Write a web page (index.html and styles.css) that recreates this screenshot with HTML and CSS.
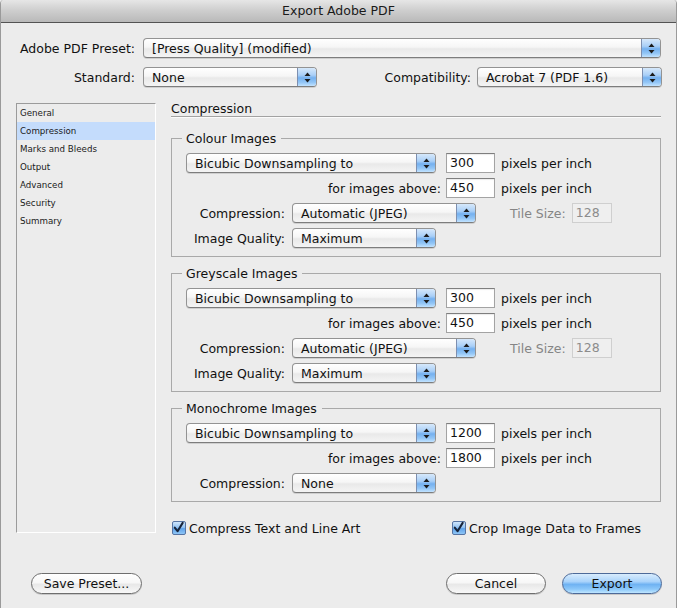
FILE: index.html
```html
<!DOCTYPE html>
<html>
<head>
<meta charset="utf-8">
<title>Export Adobe PDF</title>
<link rel="stylesheet" href="styles.css">
</head>
<body>
<div class="window">
  <div class="titlebar">Export Adobe PDF</div>
  <div class="content">
    <div class="toprow row1">
      <span class="toplabel">Adobe PDF Preset:</span>
      <div class="popup w-preset"><span class="ptext">[Press Quality] (modified)</span><span class="arrows"><svg width="7" height="11" viewBox="0 0 7 11"><path d="M3.5 0.5 L6.5 4 L0.5 4 Z" fill="#1c1c1c"/><path d="M0.5 7 L6.5 7 L3.5 10.5 Z" fill="#1c1c1c"/></svg></span></div>
    </div>
    <div class="toprow row2">
      <span class="toplabel">Standard:</span>
      <div class="popup w-std"><span class="ptext">None</span><span class="arrows"><svg width="7" height="11" viewBox="0 0 7 11"><path d="M3.5 0.5 L6.5 4 L0.5 4 Z" fill="#1c1c1c"/><path d="M0.5 7 L6.5 7 L3.5 10.5 Z" fill="#1c1c1c"/></svg></span></div>
      <span class="complabel">Compatibility:</span>
      <div class="popup w-compat"><span class="ptext">Acrobat 7 (PDF 1.6)</span><span class="arrows"><svg width="7" height="11" viewBox="0 0 7 11"><path d="M3.5 0.5 L6.5 4 L0.5 4 Z" fill="#1c1c1c"/><path d="M0.5 7 L6.5 7 L3.5 10.5 Z" fill="#1c1c1c"/></svg></span></div>
    </div>

    <div class="main">
      <ul class="sidebar">
        <li>General</li>
        <li class="selected">Compression</li>
        <li>Marks and Bleeds</li>
        <li>Output</li>
        <li>Advanced</li>
        <li>Security</li>
        <li>Summary</li>
      </ul>

      <div class="panel">
        <div class="panel-title">Compression</div>

        <fieldset class="group first">
          <legend>Colour Images</legend>
          <div class="grow">
            <div class="popup w-sample"><span class="ptext">Bicubic Downsampling to</span><span class="arrows"><svg width="7" height="11" viewBox="0 0 7 11"><path d="M3.5 0.5 L6.5 4 L0.5 4 Z" fill="#1c1c1c"/><path d="M0.5 7 L6.5 7 L3.5 10.5 Z" fill="#1c1c1c"/></svg></span></div>
            <div class="field">300</div>
            <span class="unit">pixels per inch</span>
          </div>
          <div class="grow">
            <span class="wide-label">for images above:</span>
            <div class="field">450</div>
            <span class="unit">pixels per inch</span>
          </div>
          <div class="grow">
            <span class="short-label">Compression:</span>
            <div class="popup w-comp"><span class="ptext">Automatic (JPEG)</span><span class="arrows"><svg width="7" height="11" viewBox="0 0 7 11"><path d="M3.5 0.5 L6.5 4 L0.5 4 Z" fill="#1c1c1c"/><path d="M0.5 7 L6.5 7 L3.5 10.5 Z" fill="#1c1c1c"/></svg></span></div>
            <span class="tile-label">Tile Size:</span>
            <div class="field disabled">128</div>
          </div>
          <div class="grow">
            <span class="short-label">Image Quality:</span>
            <div class="popup w-qual"><span class="ptext">Maximum</span><span class="arrows"><svg width="7" height="11" viewBox="0 0 7 11"><path d="M3.5 0.5 L6.5 4 L0.5 4 Z" fill="#1c1c1c"/><path d="M0.5 7 L6.5 7 L3.5 10.5 Z" fill="#1c1c1c"/></svg></span></div>
          </div>
        </fieldset>

        <fieldset class="group">
          <legend>Greyscale Images</legend>
          <div class="grow">
            <div class="popup w-sample"><span class="ptext">Bicubic Downsampling to</span><span class="arrows"><svg width="7" height="11" viewBox="0 0 7 11"><path d="M3.5 0.5 L6.5 4 L0.5 4 Z" fill="#1c1c1c"/><path d="M0.5 7 L6.5 7 L3.5 10.5 Z" fill="#1c1c1c"/></svg></span></div>
            <div class="field">300</div>
            <span class="unit">pixels per inch</span>
          </div>
          <div class="grow">
            <span class="wide-label">for images above:</span>
            <div class="field">450</div>
            <span class="unit">pixels per inch</span>
          </div>
          <div class="grow">
            <span class="short-label">Compression:</span>
            <div class="popup w-comp"><span class="ptext">Automatic (JPEG)</span><span class="arrows"><svg width="7" height="11" viewBox="0 0 7 11"><path d="M3.5 0.5 L6.5 4 L0.5 4 Z" fill="#1c1c1c"/><path d="M0.5 7 L6.5 7 L3.5 10.5 Z" fill="#1c1c1c"/></svg></span></div>
            <span class="tile-label">Tile Size:</span>
            <div class="field disabled">128</div>
          </div>
          <div class="grow">
            <span class="short-label">Image Quality:</span>
            <div class="popup w-qual"><span class="ptext">Maximum</span><span class="arrows"><svg width="7" height="11" viewBox="0 0 7 11"><path d="M3.5 0.5 L6.5 4 L0.5 4 Z" fill="#1c1c1c"/><path d="M0.5 7 L6.5 7 L3.5 10.5 Z" fill="#1c1c1c"/></svg></span></div>
          </div>
        </fieldset>

        <fieldset class="group">
          <legend>Monochrome Images</legend>
          <div class="grow">
            <div class="popup w-sample"><span class="ptext">Bicubic Downsampling to</span><span class="arrows"><svg width="7" height="11" viewBox="0 0 7 11"><path d="M3.5 0.5 L6.5 4 L0.5 4 Z" fill="#1c1c1c"/><path d="M0.5 7 L6.5 7 L3.5 10.5 Z" fill="#1c1c1c"/></svg></span></div>
            <div class="field">1200</div>
            <span class="unit">pixels per inch</span>
          </div>
          <div class="grow">
            <span class="wide-label">for images above:</span>
            <div class="field">1800</div>
            <span class="unit">pixels per inch</span>
          </div>
          <div class="grow">
            <span class="short-label">Compression:</span>
            <div class="popup w-qual"><span class="ptext">None</span><span class="arrows"><svg width="7" height="11" viewBox="0 0 7 11"><path d="M3.5 0.5 L6.5 4 L0.5 4 Z" fill="#1c1c1c"/><path d="M0.5 7 L6.5 7 L3.5 10.5 Z" fill="#1c1c1c"/></svg></span></div>
          </div>
        </fieldset>

        <div class="checks">
          <label class="check c1"><span class="box"><svg width="14" height="14" viewBox="0 0 14 14"><path d="M3 6.5 L6 10.5 L11.5 1.5" fill="none" stroke="#18243a" stroke-width="2.2" stroke-linecap="round" stroke-linejoin="round"/></svg></span>Compress Text and Line Art</label>
          <label class="check"><span class="box"><svg width="14" height="14" viewBox="0 0 14 14"><path d="M3 6.5 L6 10.5 L11.5 1.5" fill="none" stroke="#18243a" stroke-width="2.2" stroke-linecap="round" stroke-linejoin="round"/></svg></span>Crop Image Data to Frames</label>
        </div>
      </div>
    </div>

    <div class="buttons">
      <div class="btn b-save">Save Preset...</div>
      <div class="spacer"></div>
      <div class="btn b-cancel">Cancel</div>
      <div class="btn b-export">Export</div>
    </div>
  </div>
</div>
</body>
</html>
```

FILE: styles.css
```css
* { box-sizing: border-box; }
html, body {
  margin: 0;
  padding: 0;
  background: #ececec;
}
body {
  width: 677px;
  height: 608px;
  overflow: hidden;
  font-family: "DejaVu Sans", "Noto Sans", sans-serif;
  font-size: 12.5px;
  color: #111;
}
.window {
  width: 677px;
  height: 608px;
  border-left: 1px solid #9a9a9a;
  border-right: 1px solid #9a9a9a;
  background: #ececec;
  border-radius: 4px 4px 0 0;
  overflow: hidden;
}
.titlebar {
  height: 23px;
  line-height: 22px;
  text-align: center;
  font-size: 12.5px;
  color: #1a1a1a;
  background: linear-gradient(#e6e6e6 0%, #cfcfcf 45%, #b9b9b9 100%);
  border-bottom: 1px solid #535353;
}
.content {
  display: flex;
  flex-direction: column;
}
.toprow {
  display: flex;
  align-items: center;
  height: 20px;
}
.row1 { margin-top: 15px; }
.row2 { margin-top: 9px; }
.toplabel {
  width: 134px;
  text-align: right;
  margin-right: 8px;
}
.complabel {
  width: 154px;
  text-align: right;
  margin-right: 6px;
}

/* popup button */
.popup {
  position: relative;
  height: 20px;
  display: flex;
  align-items: center;
  border: 1px solid #939393;
  border-bottom-color: #7d7d7d;
  border-radius: 4px;
  background: linear-gradient(#ffffff 0%, #f6f6f6 45%, #e9e9e9 55%, #f4f4f4 100%);
  box-shadow: 0 1px 0 rgba(0,0,0,0.12);
  overflow: hidden;
}
.ptext {
  flex: 1;
  padding-left: 8px;
  white-space: nowrap;
  overflow: hidden;
}
.arrows {
  width: 19px;
  height: 100%;
  display: flex;
  align-items: center;
  justify-content: center;
  border-left: 1px solid #7d8fb0;
  background: linear-gradient(#d6e8fb 0%, #a9cff7 40%, #74b0ef 55%, #93c6f6 80%, #c2e3ff 100%);
}
.w-preset { width: 518px; }
.w-std { width: 174px; }
.w-compat { width: 185px; }
.w-sample { width: 250px; margin-right: 10px; }
.w-comp { width: 184px; }
.w-qual { width: 144px; }

/* main area */
.main {
  display: flex;
  margin-top: 14px;
  align-items: flex-start;
}
.sidebar {
  list-style: none;
  margin: 2px 0 0 15px;
  padding: 0;
  width: 140px;
  height: 430px;
  border: 1px solid #fff;
  border-top-color: #9b9b9b;
  border-left-color: #9b9b9b;
  font-size: 8.7px;
  color: #1a1a1a;
}
.sidebar li {
  height: 18px;
  line-height: 18px;
  padding-left: 3px;
}
.sidebar li.selected {
  background: #c4dcfc;
}
.panel {
  margin-left: 15px;
  width: 490px;
}
.panel-title {
  line-height: 15px;
  border-bottom: 1px solid #a2a2a2;
  box-shadow: 0 1px 0 #fbfbfb;
}

/* group boxes */
.group {
  margin: 9px 0 0 0;
  padding: 7px 0 8px 14px;
  border: 1px solid #a9a9a9;
  min-width: 0;
}
.group.first { margin-top: 14px; }
.group legend {
  padding: 0 5px 0 4px;
  margin-left: -4px;
  line-height: 15px;
}
.grow {
  display: flex;
  align-items: center;
  height: 20px;
  margin-bottom: 5px;
}
.grow:last-child { margin-bottom: 0; }
.wide-label {
  width: 255px;
  text-align: right;
  margin-right: 5px;
}
.short-label {
  width: 99px;
  text-align: right;
  margin-right: 7px;
}
.field {
  width: 49px;
  height: 20px;
  line-height: 18px;
  padding-left: 3px;
  background: #fff;
  border: 1px solid #a3a3a3;
  border-top-color: #7e7e7e;
  box-shadow: inset 0 1px 1px rgba(0,0,0,0.08);
}
.field.disabled {
  width: 40px;
  color: #8c8c8c;
  background: #efefef;
  border-color: #cfcfcf;
  box-shadow: none;
}
.unit { margin-left: 6px; }
.tile-label {
  margin-left: 34px;
  margin-right: 6px;
  color: #858585;
}

/* checkboxes */
.checks {
  display: flex;
  margin-top: 18px;
  height: 16px;
  align-items: center;
}
.check {
  display: flex;
  align-items: center;
}
.check.c1 { width: 280px; }
.box {
  width: 14px;
  height: 14px;
  margin-left: 1px;
  margin-right: 3px;
  border: 1px solid #5674a3;
  border-radius: 2px;
  background: linear-gradient(#cfe5fb 0%, #93c3f3 45%, #5ea2ea 55%, #8fc6f6 100%);
  display: flex;
}
.box svg { margin: -1px 0 0 -1px; }

/* buttons */
.buttons {
  display: flex;
  margin-top: 37px;
  padding: 0 14px 0 30px;
}
.spacer { flex: 1; }
.btn {
  height: 21px;
  line-height: 19px;
  text-align: center;
  border: 1px solid #6e6e6e;
  border-radius: 11px;
  background: linear-gradient(#ffffff 0%, #f7f7f7 45%, #e8e8e8 55%, #f8f8f8 100%);
  box-shadow: 0 1px 0 rgba(0,0,0,0.15);
  color: #111;
}
.b-save { width: 111px; }
.b-cancel { width: 100px; margin-right: 16px; }
.b-export {
  width: 100px;
  border-color: #4d6a99;
  background: linear-gradient(#d8ecfd 0%, #a9d3fb 40%, #6fb2f2 55%, #8cc8fa 80%, #bfe6ff 100%);
}
```
